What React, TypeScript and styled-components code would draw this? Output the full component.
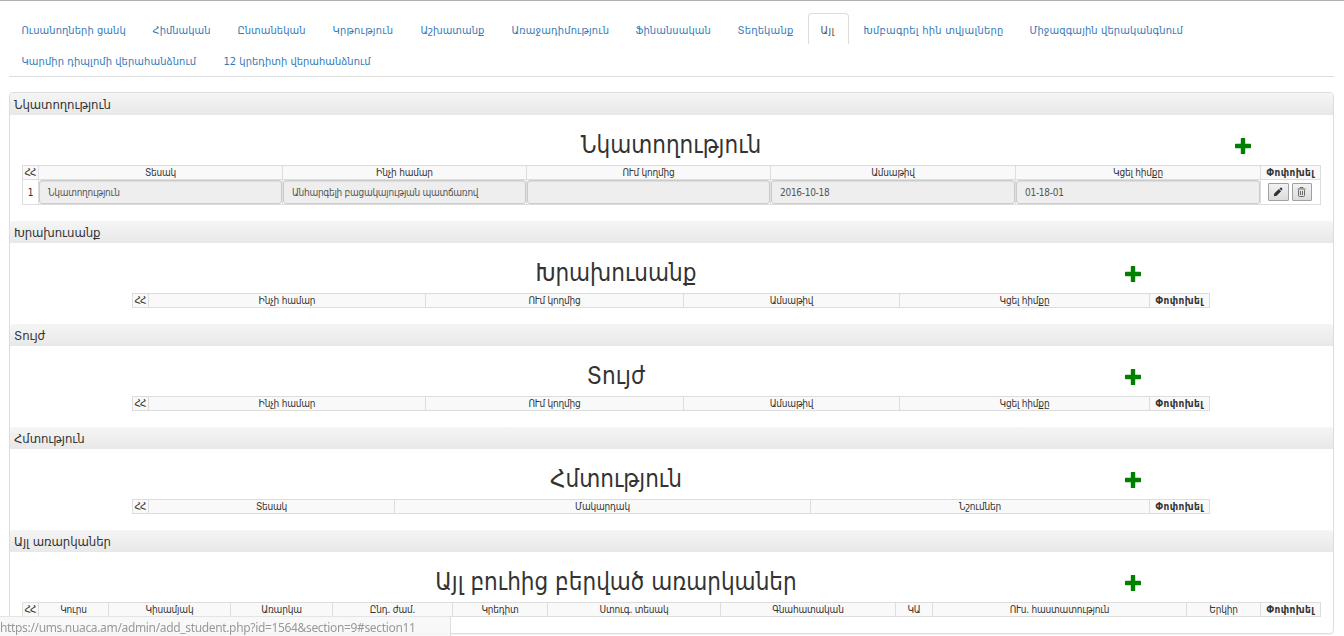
import React from "react";
import styled, { createGlobalStyle } from "styled-components";

const GlobalStyle = createGlobalStyle`
  * {
    box-sizing: border-box;
  }
  html,
  body {
    margin: 0;
    height: 636px;
    overflow: hidden;
    background: #fff;
  }
  body {
    color: #333;
    font-family: "DejaVu Sans Condensed", "DejaVu Sans", sans-serif;
    font-stretch: condensed;
    font-size: 11px;
  }
`;

const Page = styled.div`
  height: 636px;
  padding: 12px 10px 0 9px;
  border-top: 1px solid #b0b0b0;
`;

const Tabs = styled.ul`
  display: flex;
  flex-wrap: wrap;
  align-content: flex-start;
  gap: 0 2px;
  height: 64px;
  margin: 0 0 15px;
  padding: 0;
  list-style: none;
  border-bottom: 1px solid #ddd;
`;

const Tab = styled.li<{ width: number; spacing?: number; active?: boolean }>`
  width: ${(p) => p.width}px;
  height: 31px;
  padding-left: 11.5px;
  line-height: 33px;
  white-space: nowrap;
  letter-spacing: ${(p) => p.spacing || 0}px;
  color: ${(p) => (p.active ? "#555" : "#337ab7")};
  border: 1px solid ${(p) => (p.active ? "#ddd" : "transparent")};
  border-bottom: 0;
  border-radius: 4px 4px 0 0;
`;

const Panel = styled.div`
  height: 542px;
  border: 1px solid #ddd;
  border-radius: 4px;
  box-shadow: 0 1px 1px rgba(0, 0, 0, 0.05);
`;

const SectionHeader = styled.div`
  height: 22px;
  padding-left: 4px;
  line-height: 23px;
  font-size: 13px;
  letter-spacing: -0.08px;
  border-radius: 3px 3px 0 0;
  background: linear-gradient(to bottom, #f5f5f5 0%, #e8e8e8 100%);
`;

const TitleRow = styled.div<{ width: number }>`
  display: grid;
  grid-template-columns: ${(p) => p.width}px 16px;
  height: 50px;
  margin-left: 97px;

  h3 {
    margin: 0;
    line-height: 60px;
    font-size: 24px;
    font-weight: normal;
    text-align: center;
    white-space: nowrap;
  }
  svg {
    margin-top: 23px;
  }
`;

const Table = styled.div<{ columns: number[]; left: number }>`
  display: grid;
  grid-template-columns: ${(p) => p.columns.map((c) => `${c}px`).join(" ")};
  width: max-content;
  margin: 0 0 16px ${(p) => p.left}px;
  border-left: 1px solid #ddd;
  border-top: 1px solid #ddd;
  font-size: 10px;
`;

const HeadCell = styled.div<{ bold?: boolean }>`
  height: 14px;
  line-height: 13px;
  text-align: center;
  white-space: nowrap;
  font-weight: ${(p) => (p.bold ? "bold" : "normal")};
  letter-spacing: ${(p) => (p.bold ? 0.45 : -0.2)}px;
  background: #f9f9f9;
  border-right: 1px solid #ddd;
  border-bottom: 1px solid #ddd;

  &:first-child {
    padding-right: 1px;
    letter-spacing: -1px;
  }
`;

const Cell = styled.div`
  display: flex;
  align-items: center;
  justify-content: center;
  height: 25px;
  border-right: 1px solid #ddd;
  border-bottom: 1px solid #ddd;
`;

const ActionCell = styled(Cell)`
  gap: 3px;
  padding-right: 2px;
`;

const Field = styled.div`
  flex: 1;
  height: 24px;
  padding-left: 8px;
  line-height: 23px;
  white-space: nowrap;
  letter-spacing: -0.28px;
  color: #555;
  background: #eee;
  border: 1px solid #ccc;
  border-radius: 3px;
  box-shadow: inset 0 1px 1px rgba(0, 0, 0, 0.075);
`;

const IconButton = styled.button<{ width: number }>`
  display: flex;
  align-items: center;
  justify-content: center;
  width: ${(p) => p.width}px;
  height: 18px;
  padding: 0;
  border: 1px solid #a0a0a0;
  border-radius: 1px;
  background: linear-gradient(to bottom, #f2f2f2, #dcdcdc);
`;

const StatusBar = styled.div`
  position: fixed;
  left: 0;
  bottom: 0;
  width: 451px;
  height: 20px;
  line-height: 22px;
  font-family: "Noto Sans", "Open Sans", sans-serif;
  font-stretch: normal;
  font-size: 12px;
  letter-spacing: -0.34px;
  white-space: nowrap;
  color: #999;
  background: rgba(247, 247, 247, 0.88);
  border-top: 1px solid #e4e4e4;
  border-right: 1px solid #ddd;
  border-top-right-radius: 3px;
`;

const PlusIcon = () => (
  <svg width="16" height="16" viewBox="0 0 16 16">
    <path
      fill="#008000"
      d="M6.4 0h3.2q.6 0 .6.6v5.2h5.2q.6 0 .6.6v3.2q0 .6-.6.6h-5.2v5.2q0 .6-.6.6H6.4q-.6 0-.6-.6v-5.2H.6q-.6 0-.6-.6V6.400q0-.6.6-.6h5.200V.6q0-.6.6-.6z"
    />
  </svg>
);

const PencilIcon = () => (
  <svg width="10" height="10" viewBox="0 0 10 10">
    <path fill="#2b2f3a" d="M.8 9.300l.5-2.800 4.600-4.500 2.200 2.200-4.500 4.500zM6.500 1.500l.9-.7q.5-.4 1 0l.8.8q.4.500 0 1l-.7.9z" />
  </svg>
);

const TrashIcon = () => (
  <svg width="9" height="10" viewBox="0 0 9 10">
    <path fill="none" stroke="#6b6b6b" d="M3 1.500V.5h3v1M.5 2h8M1.500 3v5.500q0 1 1 1h4q1 0 1-1V3M3.500 4v4M5.500 4v4" />
  </svg>
);

interface TabData {
  label: string;
  width: number;
  spacing?: number;
}

const tabs: TabData[] = [
  { label: "Ուսանողների ցանկ", width: 129, spacing: 0.08 },
  { label: "Հիմնական", width: 83, spacing: 0.05 },
  { label: "Ընտանեկան", width: 93, spacing: 0.05 },
  { label: "Կրթություն", width: 86, spacing: 0.25 },
  { label: "Աշխատանք", width: 89 },
  { label: "Առաջադիմություն", width: 122, spacing: 0.15 },
  { label: "Ֆինանսական", width: 100, spacing: 0.1 },
  { label: "Տեղեկանք", width: 81, spacing: 0.2 },
  { label: "Այլ", width: 41, spacing: 0.4 },
  { label: "Խմբագրել հին տվյալները", width: 164, spacing: 0.27 },
  { label: "Միջազգային վերականգնում", width: 180, spacing: 0.13 },
  { label: "Կարմիր դիպլոմի վերահանձնում", width: 200, spacing: 0.1 },
  { label: "12 կրեդիտի վերահանձնում", width: 173, spacing: 0.04 },
];

interface SectionData {
  name: string;
  title: string;
  titleWidth: number;
  left: number;
  columns: number[];
  heads: string[];
  row?: string[];
}

const sections: SectionData[] = [
  {
    name: "Նկատողություն",
    title: "Նկատողություն",
    titleWidth: 1128,
    left: 12,
    columns: [16, 244, 244, 244, 245, 245, 60],
    heads: ["ՀՀ", "Տեսակ", "Ինչի համար", "ՈՒմ կողմից", "Ամսաթիվ", "Կցել հիմքը"],
    row: ["Նկատողություն", "Անհարգելի բացակայության պատճառով", "", "2016-10-18", "01-18-01"],
  },
  {
    name: "Խրախուսանք",
    title: "Խրախուսանք",
    titleWidth: 1018,
    left: 122,
    columns: [16, 277, 258, 216, 250, 60],
    heads: ["ՀՀ", "Ինչի համար", "ՈՒմ կողմից", "Ամսաթիվ", "Կցել հիմքը"],
  },
  {
    name: "Տույժ",
    title: "Տույժ",
    titleWidth: 1018,
    left: 122,
    columns: [16, 277, 258, 216, 250, 60],
    heads: ["ՀՀ", "Ինչի համար", "ՈՒմ կողմից", "Ամսաթիվ", "Կցել հիմքը"],
  },
  {
    name: "Հմտություն",
    title: "Հմտություն",
    titleWidth: 1018,
    left: 122,
    columns: [16, 246, 416, 339, 60],
    heads: ["ՀՀ", "Տեսակ", "Մակարդակ", "Նշումներ"],
  },
  {
    name: "Այլ առարկաներ",
    title: "Այլ բուհից բերված առարկաներ",
    titleWidth: 1018,
    left: 12,
    columns: [16, 70, 122, 102, 120, 95, 173, 175, 37, 254, 74, 60],
    heads: [
      "ՀՀ",
      "Կուրս",
      "Կիսամյակ",
      "Առարկա",
      "Ընդ. ժամ.",
      "Կրեդիտ",
      "Ստուգ. տեսակ",
      "Գնահատական",
      "ԿԱ",
      "ՈՒս. հաստատություն",
      "Երկիր",
    ],
  },
];

const Section: React.FC<{ data: SectionData }> = ({ data }) => (
  <div>
    <SectionHeader>{data.name}</SectionHeader>
    <TitleRow width={data.titleWidth}>
      <h3>{data.title}</h3>
      <PlusIcon />
    </TitleRow>
    <Table columns={data.columns} left={data.left}>
      {data.heads.map((head) => (
        <HeadCell key={head}>{head}</HeadCell>
      ))}
      <HeadCell bold>Փոփոխել</HeadCell>
      {data.row && (
        <>
          <Cell>1</Cell>
          {data.row.map((value, index) => (
            <Cell key={index}>
              <Field>{value}</Field>
            </Cell>
          ))}
          <ActionCell>
            <IconButton width={21}>
              <PencilIcon />
            </IconButton>
            <IconButton width={20}>
              <TrashIcon />
            </IconButton>
          </ActionCell>
        </>
      )}
    </Table>
  </div>
);

const App: React.FC = () => (
  <>
    <GlobalStyle />
    <Page>
      <Tabs>
        {tabs.map((tab) => (
          <Tab key={tab.label} width={tab.width} spacing={tab.spacing} active={tab.label === "Այլ"}>
            {tab.label}
          </Tab>
        ))}
      </Tabs>
      <Panel>
        {sections.map((section) => (
          <Section key={section.name} data={section} />
        ))}
      </Panel>
    </Page>
    <StatusBar>https://ums.nuaca.am/admin/add_student.php?id=1564&amp;section=9#section11</StatusBar>
  </>
);

export default App;
